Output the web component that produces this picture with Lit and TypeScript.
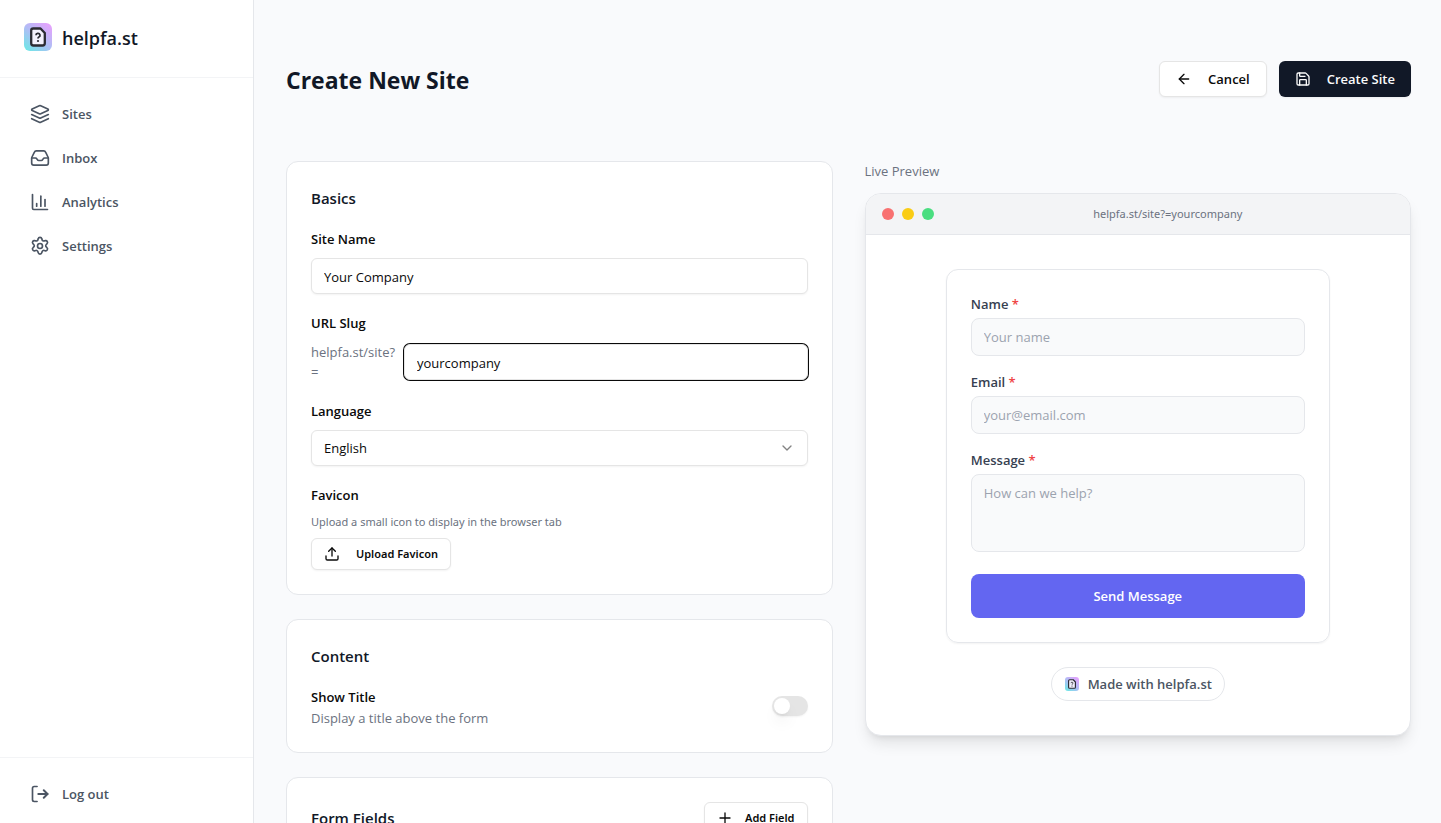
import { LitElement, html, css, svg } from "lit";
import { customElement, state } from "lit/decorators.js";
import { classMap } from "lit/directives/class-map.js";

const stroke = (size: number, body: unknown, width = 2) => html`<svg class="icon" width=${size} height=${size} viewBox="0 0 24 24" fill="none" stroke="currentColor" stroke-width=${width} stroke-linecap="round" stroke-linejoin="round" aria-hidden="true">${body}</svg>`;

const glyphs = {
  layers: svg`<path d="m12.830 2.180a2 2 0 0 0-1.660 0L2.600 6.080a1 1 0 0 0 0 1.830l8.580 3.910a2 2 0 0 0 1.660 0l8.580-3.900a1 1 0 0 0 0-1.830Z"/><path d="m22 17.650-9.170 4.160a2 2 0 0 1-1.660 0L2 17.650"/><path d="m22 12.650-9.170 4.160a2 2 0 0 1-1.660 0L2 12.650"/>`,
  inbox: svg`<path d="M2 12h4.500a2 2 0 0 1 1.700 1l.6 1a2 2 0 0 0 1.700 1h3a2 2 0 0 0 1.700-1l.6-1a2 2 0 0 1 1.700-1H22"/><path d="M5.300 5 2.400 10.800A4 4 0 0 0 2 12.600V18a2.500 2.500 0 0 0 2.500 2.500h15A2.500 2.500 0 0 0 22 18v-5.400a4 4 0 0 0-.4-1.800L18.700 5A2.500 2.500 0 0 0 16.500 3.500h-9A2.500 2.500 0 0 0 5.300 5z"/>`,
  chart: svg`<path d="M3 3v16.500A1.500 1.500 0 0 0 4.500 21H21"/><path d="M8 17v-3"/><path d="M13 17V5"/><path d="M18 17V9"/>`,
  gear: svg`<circle cx="12" cy="12" r="3"/><path d="M9.800 3.400a2.250 2.250 0 0 1 4.400 0l.3 1.100a2 2 0 0 0 2.500 1.400l1.100-.3a2.250 2.250 0 0 1 2.200 3.800l-.8.8a2 2 0 0 0 0 2.900l.8.800a2.250 2.250 0 0 1-2.200 3.800l-1.100-.3a2 2 0 0 0-2.500 1.400l-.3 1.100a2.250 2.250 0 0 1-4.400 0l-.3-1.100A2 2 0 0 0 7 17.400l-1.100.3a2.250 2.250 0 0 1-2.200-3.800l.8-.8a2 2 0 0 0 0-2.900l-.8-.8a2.250 2.250 0 0 1 2.200-3.800L7 5.900a2 2 0 0 0 2.500-1.400z"/>`,
  logout: svg`<path d="M8.500 3H5a2 2 0 0 0-2 2v14a2 2 0 0 0 2 2h3.500"/><path d="M10 12h11" stroke-width="2.400"/><path d="m16.500 7.500 4.500 4.500-4.500 4.500" stroke-width="2.400"/>`,
  back: svg`<path d="m12 19-7-7 7-7"/><path d="M19 12H5"/>`,
  save: svg`<path d="M15.200 3a2 2 0 0 1 1.400.6l3.800 3.800a2 2 0 0 1 .6 1.400V19a2 2 0 0 1-2 2H5a2 2 0 0 1-2-2V5a2 2 0 0 1 2-2z"/><path d="M17 21v-7a1 1 0 0 0-1-1H8a1 1 0 0 0-1 1v7"/><path d="M7 3v4a1 1 0 0 0 1 1h7"/>`,
  upload: svg`<path d="M3 15v4a2 2 0 0 0 2 2h14a2 2 0 0 0 2-2v-4"/><path d="m17 8-5-5-5 5"/><path d="M12 3v12"/>`,
  plus: svg`<path d="M4.500 12h15"/><path d="M12 4.500v15"/>`,
  chevron: svg`<path d="m6 9 6 6 6-6"/>`,
};

const logo = (size: number, id: string) => html`<svg class="icon" width=${size} height=${size} viewBox="0 0 28 28" aria-hidden="true">
  <defs><linearGradient id=${id} x1="0.1" y1="1" x2="0.9" y2="0"><stop offset="0" stop-color="#6ee7e7"/><stop offset="0.5" stop-color="#b0bdf5"/><stop offset="1" stop-color="#e8a0fd"/></linearGradient></defs>
  <rect width="28" height="28" rx="6" fill="url(#${id})"/>
  <path d="M9.200 5.500h7.300l4.300 4.500V20.300a2.200 2.200 0 0 1-2.200 2.200H9.400a2.200 2.200 0 0 1-2.200-2.200V7.500a2 2 0 0 1 2-2z" fill="#f3f1fd" stroke="#2b2b33" stroke-width="2.300" stroke-linejoin="round"/>
  <path d="M12 12.300a2 1.900 0 1 1 2.900 1.700c-.7.4-.9.7-.9 1.400" fill="none" stroke="#2b2b33" stroke-width="1.800"/><circle cx="14" cy="18" r="1.100" fill="#2b2b33"/>
</svg>`;

@customElement("app-root")
export class AppRoot extends LitElement {
  @state() private siteName = "Your Company";
  @state() private slug = "yourcompany";
  @state() private showTitle = false;

  static styles = css`
    :host { display: block; height: 100vh; font-family: "Open Sans", "Noto Sans", sans-serif; font-size: 13px; line-height: 20px; color: #0a0a0a; }
    *, *::before { box-sizing: border-box; }
    h1, h2, p { margin: 0; }
    button, input, select, textarea { font: inherit; color: inherit; margin: 0; }
    .icon { flex: none; display: block; }
    .shell { display: flex; height: 100%; background: #f9fafc; overflow: hidden; }
    .sidebar { flex: none; width: 254px; display: flex; flex-direction: column; background: #fff; border-right: 1px solid #e5e7eb; }
    .brand { display: flex; align-items: center; gap: 10px; height: 78px; padding: 0 24px 3px; border-bottom: 1px solid #f3f4f6; font-size: 18px; line-height: 28px; font-weight: 600; color: #111827; }
    .brand span { padding-top: 2px; }
    .nav { flex: 1; display: flex; flex-direction: column; gap: 4px; padding: 16px; }
    .foot { border-top: 1px solid #f3f4f6; padding: 16px 16px 9px; }
    .item { display: flex; align-items: center; gap: 12px; width: 100%; height: 40px; padding: 0 14px; border: 0; background: none; border-radius: 8px; color: #4b5563; font-weight: 600; text-decoration: none; }
    .main { flex: 1; min-width: 0; overflow-y: auto; scrollbar-width: none; padding: 61px 30px 32px 32px; }
    .top { display: flex; align-items: center; justify-content: space-between; margin-bottom: 64px; }
    .title { padding-top: 2px; font-size: 23px; line-height: 32px; font-weight: 700; color: #111827; }
    .actions { display: flex; gap: 12px; }
    .btn { display: inline-flex; align-items: center; gap: 16px; height: 36px; padding: 0 16px; border: 1px solid #e5e5e5; border-radius: 6px; background: #fff; box-shadow: 0 1px 2px rgba(0,0,0,.05); font-weight: 600; white-space: nowrap; }
    .dark { background: #111827; border: 0; color: #fafafa; }
    .small { height: 32px; padding: 0 12px; font-family: "Noto Sans", sans-serif; font-size: 11px; align-self: flex-start; }
    .tight { gap: 12px; }
    .columns { display: grid; grid-template-columns: minmax(0, 1fr) minmax(0, 1fr); gap: 32px; align-items: start; }
    .stack { display: flex; flex-direction: column; gap: 24px; }
    .card { display: flex; flex-direction: column; gap: 22px; padding: 24px; background: #fff; border: 1px solid #e5e7eb; border-radius: 12px; }
    .heading { font-size: 15px; line-height: 24px; font-weight: 600; color: #111827; }
    .field { display: flex; flex-direction: column; gap: 12px; }
    .label { line-height: 14px; font-weight: 600; }
    .input { width: 100%; height: 36px; padding: 0 12px; border: 1px solid #e5e5e5; border-radius: 6px; background: #fff; box-shadow: 0 1px 2px rgba(0,0,0,.05); outline: none; }
    input.input { padding-top: 2px; }
    .active { box-shadow: 0 0 0 1px #0a0a0a; }
    .slug { display: flex; align-items: center; gap: 8px; color: #6b7280; }
    .prefix { flex: 0 0 85px; overflow-wrap: anywhere; }
    .slug .input { color: #0a0a0a; }
    .select { position: relative; }
    .select .input { display: block; appearance: none; }
    .select .icon { position: absolute; right: 13px; top: 10px; opacity: .5; pointer-events: none; }
    .hint { font-family: "Noto Sans", sans-serif; font-size: 11px; line-height: 16px; color: #6b7280; }
    .upload { display: flex; flex-direction: column; gap: 8px; }
    .row { display: flex; align-items: center; justify-content: space-between; }
    .pair { display: flex; flex-direction: column; gap: 4px; color: #6b7280; }
    .pair .label { color: #0a0a0a; }
    .switch { appearance: none; flex: none; width: 36px; height: 20px; margin-bottom: 6px; padding: 2px; border-radius: 10px; background: #e5e5e5; box-shadow: 0 1px 2px rgba(0,0,0,.05); }
    .switch::before { content: ""; display: block; width: 16px; height: 16px; border-radius: 50%; background: #fff; box-shadow: 0 10px 15px -3px rgba(0,0,0,.1), 0 4px 6px -4px rgba(0,0,0,.1); }
    .switch:checked { background: #111827; }
    .switch:checked::before { margin-left: 16px; }
    .live { display: flex; flex-direction: column; gap: 12px; color: #6b7280; }
    .window { overflow: hidden; background: #fff; border: 1px solid #e5e7eb; border-radius: 16px; box-shadow: 0 10px 15px -3px rgba(0,0,0,.1), 0 4px 6px -4px rgba(0,0,0,.1); }
    .bar { display: flex; align-items: center; gap: 8px; height: 41px; padding: 0 16px; background: #f3f4f6; border-bottom: 1px solid #e5e7eb; }
    .dot { width: 12px; height: 12px; border-radius: 50%; background: #f87171; }
    .yellow { background: #facc15; }
    .green { background: #4ade80; }
    .url { flex: 1; text-align: center; font-family: "Noto Sans", sans-serif; font-size: 11px; line-height: 16px; }
    .stage { display: flex; flex-direction: column; align-items: center; gap: 24px; padding: 34px 24px; }
    .form { width: 100%; max-width: 384px; display: flex; flex-direction: column; gap: 16px; padding: 24px; border: 1px solid #e5e7eb; border-radius: 12px; box-shadow: 0 1px 2px rgba(0,0,0,.05); }
    .entry { display: flex; flex-direction: column; gap: 4px; color: #374151; font-weight: 600; }
    .star { color: #ef4444; }
    .box { display: block; width: 100%; height: 38px; padding: 0 12px; border: 1px solid #e5e7eb; border-radius: 8px; background: #f9fafb; font-weight: 400; resize: none; outline: none; }
    .box::placeholder { color: #9ca3af; opacity: 1; }
    .area { height: 78px; padding: 8px 12px; }
    .send { height: 44px; margin-top: 6px; border: 0; border-radius: 8px; background: #6366f1; color: #fff; font-weight: 600; }
    .badge { display: inline-flex; align-items: center; gap: 9px; height: 34px; padding: 0 12px 0 13px; border: 1px solid #e5e7eb; border-radius: 17px; background: #fff; color: #4b5563; font-weight: 600; text-decoration: none; }
  `;

  private links = [
    { text: "Sites", icon: glyphs.layers },
    { text: "Inbox", icon: glyphs.inbox },
    { text: "Analytics", icon: glyphs.chart },
    { text: "Settings", icon: glyphs.gear },
  ];

  private entry(id: string, text: string, hint: string, area = false) {
    return html`<div class="entry">
      <label for=${id}>${text} <span class="star">*</span></label>
      ${area ? html`<textarea class="box area" id=${id} placeholder=${hint}></textarea>` : html`<input class="box" id=${id} placeholder=${hint}>`}
    </div>`;
  }

  render() {
    return html`<div class="shell">
      <aside class="sidebar">
        <div class="brand">${logo(28, "brand-fill")}<span>helpfa.st</span></div>
        <nav class="nav">${this.links.map((l) => html`<a class="item" href="#">${stroke(20, l.icon)}<span>${l.text}</span></a>`)}</nav>
        <div class="foot"><button class="item" type="button">${stroke(20, glyphs.logout)}<span>Log out</span></button></div>
      </aside>
      <main class="main">
        <header class="top">
          <h1 class="title">Create New Site</h1>
          <div class="actions">
            <button class="btn" type="button">${stroke(16, glyphs.back)}Cancel</button>
            <button class="btn dark" type="button">${stroke(16, glyphs.save)}Create Site</button>
          </div>
        </header>
        <div class="columns">
          <div class="stack">
            <section class="card">
              <h2 class="heading">Basics</h2>
              <div class="field">
                <label class="label" for="site-name">Site Name</label>
                <input class="input" id="site-name" .value=${this.siteName} @input=${(e: Event) => (this.siteName = (e.target as HTMLInputElement).value)}>
              </div>
              <div class="field">
                <label class="label" for="slug">URL Slug</label>
                <div class="slug"><span class="prefix">helpfa.st/site?=</span>
                  <input class=${classMap({ input: true, active: true })} id="slug" .value=${this.slug} @input=${(e: Event) => (this.slug = (e.target as HTMLInputElement).value)}></div>
              </div>
              <div class="field">
                <label class="label" for="language">Language</label>
                <div class="select"><select class="input" id="language"><option>English</option></select>${stroke(16, glyphs.chevron)}</div>
              </div>
              <div class="field">
                <span class="label">Favicon</span>
                <div class="upload">
                  <p class="hint">Upload a small icon to display in the browser tab</p>
                  <button class="btn small" type="button">${stroke(16, glyphs.upload)}Upload Favicon</button>
                </div>
              </div>
            </section>
            <section class="card">
              <h2 class="heading">Content</h2>
              <div class="row">
                <div class="pair"><label class="label" for="show-title">Show Title</label><p>Display a title above the form</p></div>
                <input class="switch" id="show-title" type="checkbox" .checked=${this.showTitle} @change=${(e: Event) => (this.showTitle = (e.target as HTMLInputElement).checked)}>
              </div>
            </section>
            <section class="card">
              <div class="row"><h2 class="heading">Form Fields</h2><button class="btn small tight" type="button">${stroke(16, glyphs.plus)}Add Field</button></div>
            </section>
          </div>
          <section class="live">
            <p>Live Preview</p>
            <div class="window">
              <div class="bar"><span class="dot"></span><span class="dot yellow"></span><span class="dot green"></span><span class="url">helpfa.st/site?=${this.slug}</span></div>
              <div class="stage">
                <form class="form" @submit=${(e: Event) => e.preventDefault()}>
                  ${this.entry("name", "Name", "Your name")}
                  ${this.entry("email", "Email", "your@email.com")}
                  ${this.entry("message", "Message", "How can we help?", true)}
                  <button class="send" type="submit">Send Message</button>
                </form>
                <a class="badge" href="#">${logo(14, "badge-fill")}<span>Made with helpfa.st</span></a>
              </div>
            </div>
          </section>
        </div>
      </main>
    </div>`;
  }
}
